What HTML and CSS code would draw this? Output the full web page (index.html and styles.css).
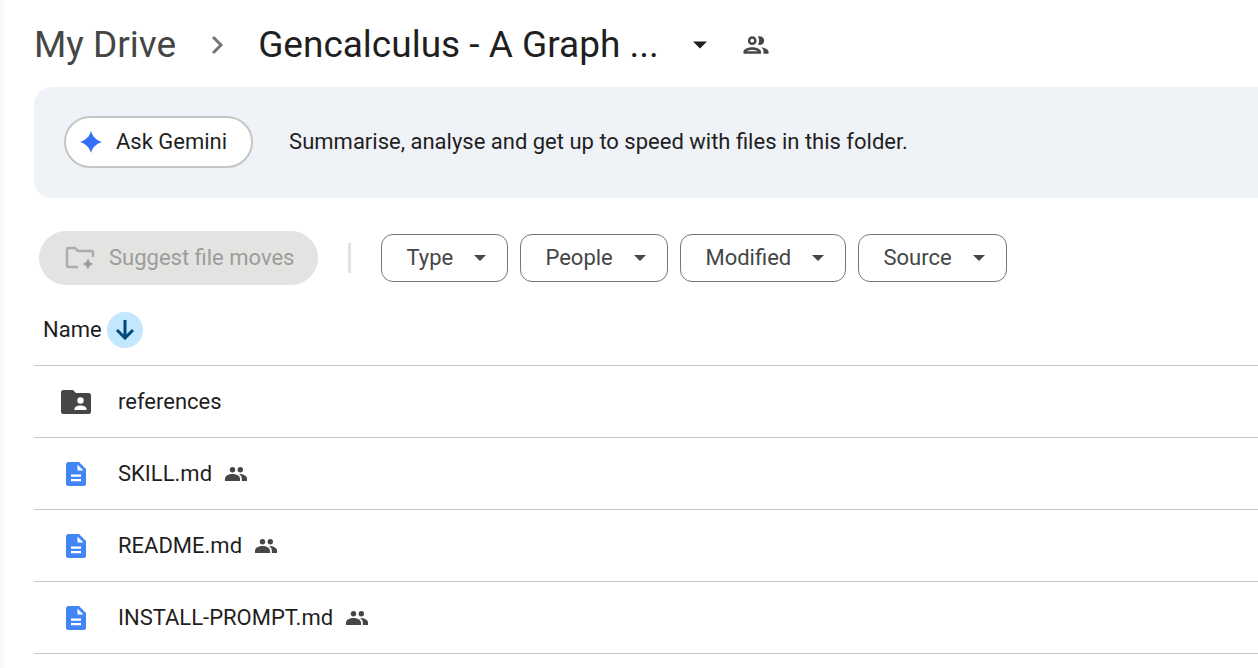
FILE: index.html
```
<!DOCTYPE html>
<html lang="en">
	<head>
		<meta charset="UTF-8">
		<meta name="viewport" content="width=device-width, initial-scale=1">
		<title>Gencalculus - My Drive</title>
		<link rel="stylesheet" href="styles.css">
	</head>
	<body>
		<!-- shared icons -->
		<svg class="sprite" aria-hidden="true">
			<symbol id="icon-people" viewBox="0 0 22 14">
				<circle cx="7.5" cy="2.7" r="2.7"/>
				<circle cx="15.3" cy="2.7" r="2.7"/>
				<path d="M0 14v-2.2C0 8.6 3.8 7 7.5 7s7.5 1.600 7.5 4.800V14z"/>
				<path d="M14.200 7.100c4 .1 7.800 1.600 7.800 4.700V14h-5.200v-2.200c0-2-1-3.600-2.600-4.700z"/>
			</symbol>
			<symbol id="icon-doc" viewBox="0 0 20 24">
				<path d="M2.5 0H13l7 7v14.5a2.500 2.500 0 0 1-2.500 2.500h-15A2.500 2.500 0 0 1 0 21.500v-19A2.500 2.500 0 0 1 2.500 0z" fill="#4285f4"/>
				<path d="M11.500 2.500v6h6zM5 12.500h10v2.200H5zM5 17h10v2.200H5z" fill="#fff"/>
			</symbol>
			<symbol id="icon-arrow" viewBox="0 0 10 5">
				<path d="M0 0h10L5 5z"/>
			</symbol>
		</svg>

		<main class="wrap">
			<nav class="crumbs" aria-label="Breadcrumb">
				<a class="root" href="#">My Drive</a>
				<svg class="chevron" viewBox="0 0 14 20" aria-hidden="true"><path d="M3 2l8 8-8 8"/></svg>
				<button class="current" type="button" aria-haspopup="true">
					Gencalculus - A Graph ...
					<svg class="caret" aria-hidden="true"><use href="#icon-arrow"/></svg>
				</button>
				<button class="share" type="button" aria-label="Manage access">
					<svg viewBox="0 0 24 24" aria-hidden="true"><path d="M9 13.75c-2.34 0-7 1.17-7 3.5V19h14v-1.75c0-2.33-4.66-3.5-7-3.5zM4.34 17c.84-.58 2.87-1.25 4.66-1.25s3.82.67 4.66 1.25H4.34zM9 12c1.93 0 3.5-1.57 3.5-3.5S10.93 5 9 5 5.5 6.57 5.5 8.5 7.07 12 9 12zm0-5c.83 0 1.5.67 1.5 1.5S9.83 10 9 10s-1.5-.67-1.5-1.5S8.17 7 9 7zm7.04 6.81c1.16.84 1.96 1.96 1.96 3.44V19h4v-1.75c0-2.02-3.5-3.17-5.96-3.44zM15 12c1.93 0 3.5-1.57 3.5-3.5S16.93 5 15 5c-.54 0-1.04.13-1.5.35.63.89 1 1.98 1 3.15s-.37 2.26-1 3.15c.46.22.96.35 1.5.35z"/></svg>
				</button>
			</nav>

			<section class="banner">
				<button class="ask" type="button">
					<svg viewBox="0 0 22 22" aria-hidden="true"><path d="M11 0c1.6 5.6 4.800 9 11 11-6.200 2-9.400 5.400-11 11-1.600-5.600-4.800-9-11-11 6.200-2 9.400-5.400 11-11z"/></svg>
					Ask Gemini
				</button>
				<p>Summarise, analyse and get up to speed with files in this folder.</p>
			</section>

			<div class="toolbar">
				<button class="suggest" type="button" disabled>
					<svg viewBox="0 0 30 26" aria-hidden="true">
						<path class="line" d="M13 22H4a2 2 0 0 1-2-2V5a2 2 0 0 1 2-2h6l3 3h13a2 2 0 0 1 2 2v4"/>
						<path class="spark" d="M23 13c.9 3.600 2.400 5.100 6 6-3.600.9-5.100 2.400-6 6-.9-3.600-2.400-5.100-6-6 3.600-.9 5.100-2.400 6-6z"/>
					</svg>
					Suggest file moves
				</button>
				<span class="divider"></span>
				<div class="filters">
					<div class="filter">
						<select aria-label="Type"><option>Type</option></select>
						<svg aria-hidden="true"><use href="#icon-arrow"/></svg>
					</div>
					<div class="filter">
						<select aria-label="People"><option>People</option></select>
						<svg aria-hidden="true"><use href="#icon-arrow"/></svg>
					</div>
					<div class="filter">
						<select aria-label="Modified"><option>Modified</option></select>
						<svg aria-hidden="true"><use href="#icon-arrow"/></svg>
					</div>
					<div class="filter">
						<select aria-label="Source"><option>Source</option></select>
						<svg aria-hidden="true"><use href="#icon-arrow"/></svg>
					</div>
				</div>
			</div>

			<table class="files">
				<thead>
					<tr>
						<th scope="col" aria-sort="descending">
							<div class="head">
								Name
								<button class="sort" type="button" aria-label="Reverse sort direction">
									<svg viewBox="0 0 20 20" aria-hidden="true"><path d="M10 0v18M2 10l8 8 8-8"/></svg>
								</button>
							</div>
						</th>
					</tr>
				</thead>
				<tbody>
					<tr>
						<td>
							<div class="file">
								<svg class="fileIcon" viewBox="0 0 30 24" aria-hidden="true">
									<path d="M2.5 0H12l3 3h12.500A2.500 2.500 0 0 1 30 5.500v16a2.500 2.500 0 0 1-2.500 2.500h-25A2.500 2.500 0 0 1 0 21.500v-19A2.500 2.500 0 0 1 2.500 0z" fill="#444746"/>
									<path d="M13.500 20v-1.200c0-2.100 3.200-3.300 6-3.300s6 1.200 6 3.300V20z" fill="#fff"/>
									<circle cx="19.5" cy="10.5" r="3.2" fill="#fff"/>
								</svg>
								<a href="#">references</a>
							</div>
						</td>
					</tr>
					<tr>
						<td>
							<div class="file">
								<svg class="fileIcon" aria-hidden="true"><use href="#icon-doc"/></svg>
								<a href="#">SKILL.md</a>
								<svg class="shared" role="img" aria-label="Shared"><use href="#icon-people"/></svg>
							</div>
						</td>
					</tr>
					<tr>
						<td>
							<div class="file">
								<svg class="fileIcon" aria-hidden="true"><use href="#icon-doc"/></svg>
								<a href="#">README.md</a>
								<svg class="shared" role="img" aria-label="Shared"><use href="#icon-people"/></svg>
							</div>
						</td>
					</tr>
					<tr>
						<td>
							<div class="file">
								<svg class="fileIcon" aria-hidden="true"><use href="#icon-doc"/></svg>
								<a href="#">INSTALL-PROMPT.md</a>
								<svg class="shared" role="img" aria-label="Shared"><use href="#icon-people"/></svg>
							</div>
						</td>
					</tr>
				</tbody>
			</table>
		</main>
	</body>
</html>
```

FILE: styles.css
```
* {
	box-sizing: border-box;
}
body {
	margin: 0;
	background-color: #fff;
	color: #1f1f1f;
	font: 22px/28px Roboto, "Liberation Sans", sans-serif;
}
a {
	color: inherit;
	text-decoration: none;
}
p {
	margin: 0;
}
button,
select {
	margin: 0;
	padding: 0;
	border: none;
	background-color: transparent;
	color: inherit;
	font: inherit;
}
svg {
	display: block;
	flex: none;
	fill: currentColor;
}
.sprite {
	position: absolute;
	width: 0;
	height: 0;
}
.wrap {
	min-height: 100vh;
	padding-left: 30px;
	border-left: 4px solid #f9fafb;
}

/* breadcrumb */
.crumbs {
	display: flex;
	align-items: center;
	height: 87px;
	padding-top: 3px;
	font-size: 37px;
	line-height: 44px;
	white-space: nowrap;
}
.root {
	color: #444746;
}
.chevron {
	width: 14px;
	height: 20px;
	margin: 0 34px;
	fill: none;
	stroke: #747775;
	stroke-width: 3;
}
.current {
	display: flex;
	align-items: center;
	gap: 34px;
}
.caret {
	width: 14px;
	height: 8px;
}
.share {
	margin-left: 34px;
	color: #444746;
}
.share svg {
	width: 30px;
	height: 30px;
}

/* gemini banner */
.banner {
	display: flex;
	align-items: center;
	gap: 36px;
	padding: 29px 30px 30px;
	border-radius: 18px 0 0 18px;
	background-color: #eff2f7;
}
.ask {
	display: flex;
	align-items: center;
	gap: 14px;
	height: 52px;
	padding: 0 24px 0 14px;
	border: 2px solid #c4c7c5;
	border-radius: 26px;
	background-color: #fff;
	white-space: nowrap;
}
.ask svg {
	width: 22px;
	height: 22px;
	color: #3270f6;
}

/* toolbar */
.toolbar {
	display: flex;
	align-items: center;
	padding: 33px 0 26px 5px;
}
.suggest {
	display: flex;
	align-items: center;
	gap: 14px;
	height: 54px;
	padding: 0 24px 0 26px;
	border-radius: 27px;
	background-color: #e3e3e1;
	color: #9c9d9b;
	white-space: nowrap;
}
.suggest svg {
	width: 30px;
	height: 26px;
}
.suggest .line {
	fill: none;
	stroke: #acadab;
	stroke-width: 2.5;
}
.divider {
	width: 3px;
	height: 30px;
	margin: 0 30px;
	background-color: #e1e3e1;
}
.filters {
	display: flex;
	gap: 12px;
}
.filter {
	display: grid;
	align-items: center;
	color: #444746;
}
.filter select,
.filter svg {
	grid-area: 1 / 1;
}
.filter select {
	height: 48px;
	padding: 0 54px 0 24px;
	border: 1px solid #747775;
	border-radius: 12px;
	appearance: none;
}
.filter svg {
	justify-self: end;
	width: 12px;
	height: 6px;
	margin-right: 22px;
	pointer-events: none;
}

/* file list */
.files {
	width: 100%;
	border-collapse: collapse;
}
.files th,
.files td {
	padding: 0;
	border-bottom: 1px solid #c4c7c5;
	font-weight: 400;
	text-align: left;
}
.head {
	display: flex;
	align-items: center;
	gap: 5px;
	height: 54px;
	padding: 0 0 16px 9px;
}
.sort {
	display: flex;
	align-items: center;
	justify-content: center;
	width: 36px;
	height: 36px;
	border-radius: 50%;
	background-color: #c2e7ff;
	color: #004a77;
}
.sort svg {
	width: 20px;
	height: 20px;
	fill: none;
	stroke: currentColor;
	stroke-width: 3;
}
.file {
	display: flex;
	align-items: center;
	height: 71px;
	padding-left: 27px;
}
.fileIcon {
	width: 30px;
	height: 24px;
	margin-right: 27px;
}
.shared {
	width: 22px;
	height: 14px;
	margin-left: 13px;
	color: #444746;
}
```
